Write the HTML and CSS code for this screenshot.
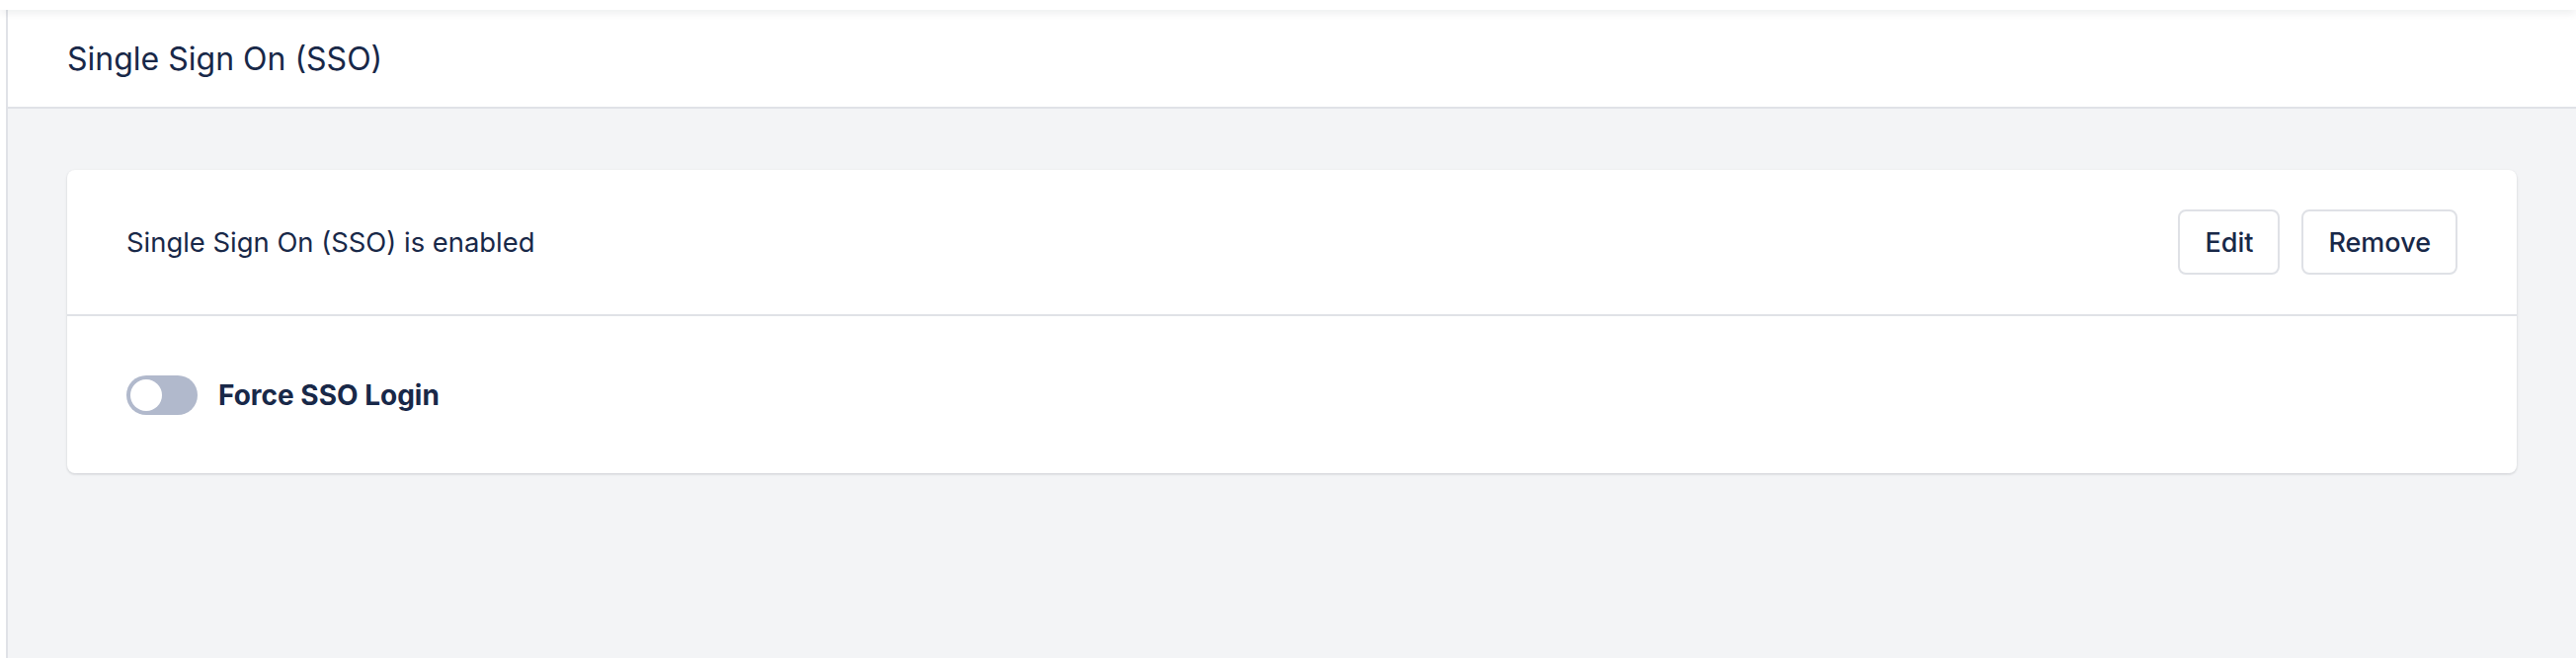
FILE: index.html
```html
<!DOCTYPE html>
<html lang="en">
<head>
    <meta charset="UTF-8">
    <meta name="viewport" content="width=device-width, initial-scale=1.0">
    <title>Single Sign On (SSO)</title>
    <link rel="stylesheet" href="styles.css">
</head>
<body>
    <div class="topbar"></div>
    <div class="layout">
        <aside class="sidebar"></aside>
        <main class="main">
            <header class="page-header">
                <h1>Single Sign On (SSO)</h1>
            </header>
            <section class="content">
                <div class="card">
                    <div class="card-row status-row">
                        <span class="status-text">Single Sign On (SSO) is enabled</span>
                        <div class="actions">
                            <button type="button" class="btn">Edit</button>
                            <button type="button" class="btn">Remove</button>
                        </div>
                    </div>
                    <div class="card-row toggle-row">
                        <label class="switch">
                            <input type="checkbox" id="forceSso">
                            <span class="slider"></span>
                        </label>
                        <label for="forceSso" class="toggle-label">Force SSO Login</label>
                    </div>
                </div>
            </section>
        </main>
    </div>
</body>
</html>
```

FILE: styles.css
```css
body {
    font-family: Inter, "Noto Sans", Arial, sans-serif;
    color: #182848;
    margin: 0;
    background-color: #ffffff;
}

.topbar {
    height: 10px;
    background: #ffffff;
    position: relative;
    z-index: 2;
    box-shadow: 0 3px 8px rgba(17, 24, 39, 0.08);
}

.layout {
    display: flex;
    height: calc(100vh - 10px);
}

.sidebar {
    width: 6px;
    background: #ffffff;
    border-right: 2px solid #e0e2e7;
}

.main {
    flex: 1;
    background-color: #f3f4f6;
}

.page-header {
    height: 98px;
    background: #ffffff;
    border-bottom: 2px solid #e0e2e7;
    display: flex;
    align-items: center;
    padding-left: 60px;
}

h1 {
    margin: 0;
    font-size: 32px;
    font-weight: 400;
}

.content {
    padding: 62px 60px;
}

.card {
    background: white;
    border-radius: 8px;
    box-shadow: 0 1px 3px rgba(17, 24, 39, 0.12), 0 1px 2px rgba(17, 24, 39, 0.06);
}

.card-row {
    display: flex;
    align-items: center;
    padding: 40px 60px;
}

.status-row {
    justify-content: space-between;
    border-bottom: 2px solid #e0e2e7;
}

.status-text {
    font-size: 27.4px;
}

.actions {
    display: flex;
    gap: 22px;
}

.btn {
    height: 66px;
    padding: 0 25px;
    font-family: inherit;
    font-size: 27px;
    font-weight: 500;
    color: #182848;
    background: white;
    border: 2px solid #dfe1e6;
    border-radius: 8px;
    cursor: pointer;
}

.toggle-row {
    padding: 60px 60px 59px;
    gap: 21px;
}

.switch {
    position: relative;
    display: block;
    width: 72px;
    height: 40px;
}

.switch input {
    display: none;
}

.slider {
    display: block;
    width: 100%;
    height: 100%;
    background: #b1b9cc;
    border-radius: 20px;
    cursor: pointer;
}

.slider::before {
    content: "";
    position: absolute;
    top: 4px;
    left: 4px;
    width: 32px;
    height: 32px;
    border-radius: 50%;
    background: white;
}

.toggle-label {
    font-size: 28px;
    font-weight: 700;
    cursor: pointer;
}
```
